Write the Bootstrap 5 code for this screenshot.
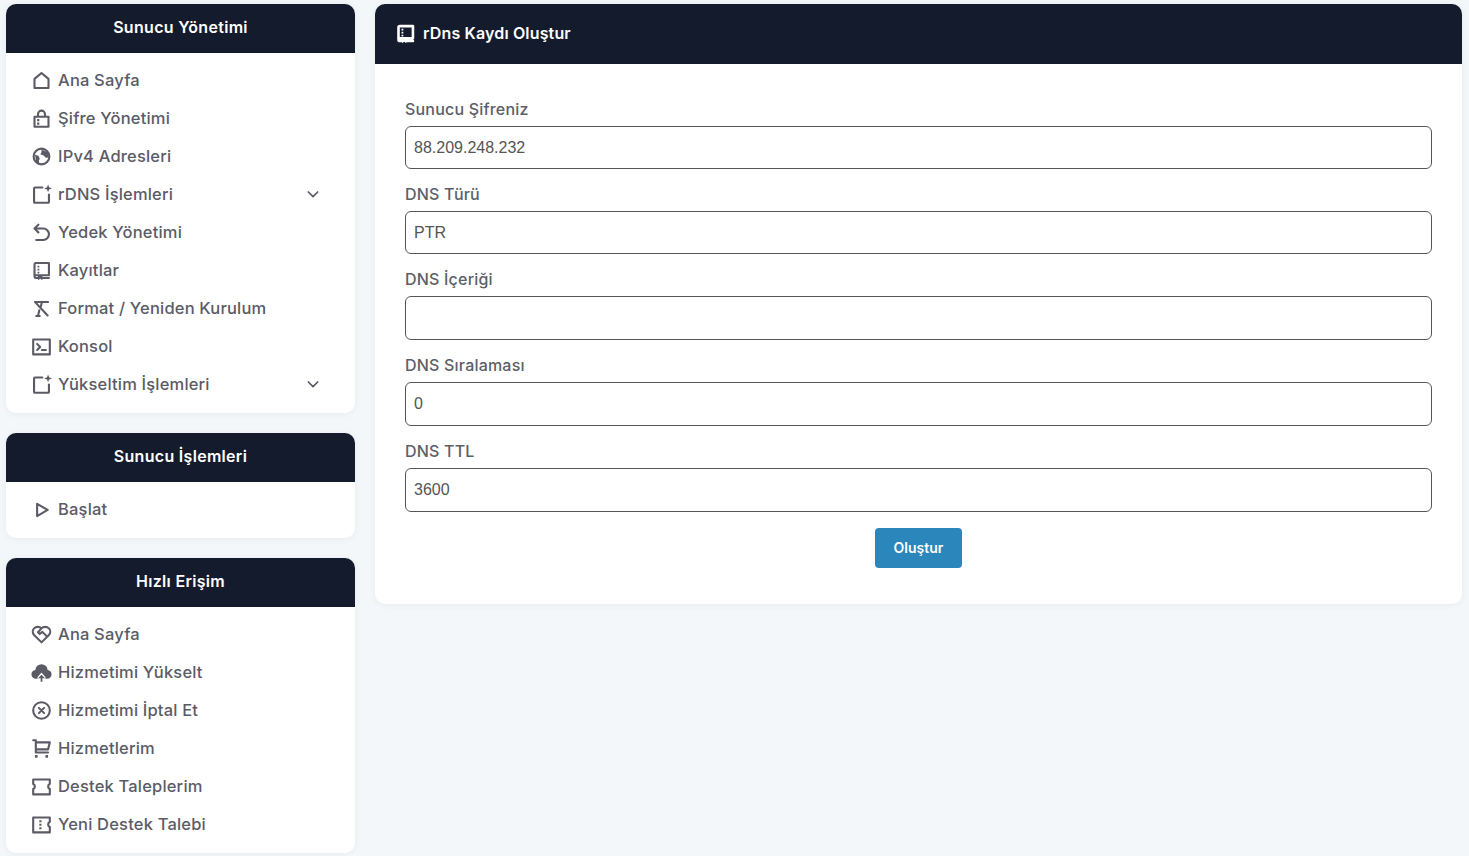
<!DOCTYPE html>
<html lang="tr">
<head>
    <meta charset="UTF-8">
    <meta name="viewport" content="width=device-width, initial-scale=1.0">
    <title>rDns Kaydı Oluştur</title>
    <link href="https://cdn.jsdelivr.net/npm/bootstrap@5.3.0/dist/css/bootstrap.min.css" rel="stylesheet">
    <style>
        body { background: #f3f7f9; font-family: Inter, "Noto Sans", sans-serif; color: #5b5b66; }
        .page-wrap { padding: 4px 7px 0 6px; gap: 20px; }
        .side-col { width: 349px; flex: none; }
        .main-col { flex: 1; min-width: 0; }
        .panel { border: 0; border-radius: 10px; box-shadow: 0 1px 6px rgba(30, 50, 70, .06); overflow: hidden; }
        .side-col .panel { margin-bottom: 20px; }
        .panel .card-header { background: #141b2d; color: #fff; border: 0; border-radius: 0; font-weight: 600; font-size: 16px; letter-spacing: .3px; }
        .side-col .card-header { height: 49px; line-height: 47px; padding: 0; text-align: center; }
        .main-col .card-header { height: 60px; padding: 0 20px 2px; gap: 7px; letter-spacing: .15px; }
        .main-col .card-header .ico { stroke-width: 3; }
        .side-menu { padding: 9px 0; }
        .side-menu a { height: 38px; padding: 0 34px 2px 25px; gap: 6px; color: #5b5b66; text-decoration: none; font-size: 16.5px; font-weight: 500; letter-spacing: .18px; }
        .ico { width: 21px; height: 21px; flex: none; fill: none; stroke: currentColor; stroke-width: 2.4; stroke-linejoin: round; stroke-linecap: round; }
        .solid { fill: currentColor; stroke: none; }
        .chev { width: 16px; height: 16px; margin-left: auto; }
        .form-body { padding: 35px 30px 36px; }
        .form-body .form-label { display: block; margin: 0 0 6px; height: 21px; line-height: 21px; font-size: 16px; font-weight: 500; letter-spacing: .2px; color: #5b6068; }
        .form-body .form-control { height: 43px; border: 1px solid #555; border-radius: 6px; padding: 0 8px; font-family: "Liberation Sans", Arial, sans-serif; font-size: 16px; color: #555; margin-bottom: 15px; }
        .form-body .form-control.tall-input { height: 44px; }
        .form-body .form-control:last-of-type { margin-bottom: 16px; }
        .save-btn { width: 87px; height: 40px; padding: 0 0 2px; background: #2a86bb; border: 0; border-radius: 4px; color: #fff; font-size: 14px; font-weight: 600; }
    </style>
</head>
<body>
    <svg class="d-none">
        <symbol id="i-home" viewBox="0 0 24 24"><path d="M4 20.500V10.200L12 3.500l8 6.700v10.300z"/></symbol>
        <symbol id="i-lock" viewBox="0 0 24 24"><path d="M4 10h16v11.500H4zM8 10V7a4 4 0 0 1 8 0v3"/><path class="solid" d="M7 12.500h2.500v2.500H7zM7 16.500h2.500V19H7z"/></symbol>
        <symbol id="i-earth" viewBox="0 0 24 24"><circle cx="12" cy="12" r="9"/><path class="solid" d="M12 4l7 3 1.500 6-3.500.500-3-3-3.500-1 1.500-2.500zM4.500 10l4 1 1.500 3.500-1 2 .5 4-3.500-2.500z"/></symbol>
        <symbol id="i-spark" viewBox="0 0 24 24"><path d="M13 4H4.500a1 1 0 0 0-1 1v15.500a1 1 0 0 0 1 1H19.500a1 1 0 0 0 1-1V12"/><path class="solid" d="M19.500 .5l1.200 3.300 3.300 1.200-3.300 1.200-1.200 3.300-1.200-3.300L15 5l3.300-1.200z"/></symbol>
        <symbol id="i-back" viewBox="0 0 24 24"><path d="M8.500 3L4 7.500l4.500 4.500M4.500 7.500H14a6.500 6.500 0 0 1 0 13H6"/></symbol>
        <symbol id="i-book" viewBox="0 0 24 24"><path d="M4 18V5a1.500 1.500 0 0 1 1.500-1.500H20.500v14H5.500A1.500 1.500 0 0 0 4 19a1.500 1.500 0 0 0 1.500 1.500H8M13 20.500h7.500"/><path class="solid" d="M7.500 6.500h2v2h-2zM7.500 10h2v2h-2zM7.500 13.500h2v2h-2zM8 18h5v5l-2.500-1.500L8 23z"/></symbol>
        <symbol id="i-format" viewBox="0 0 24 24"><path d="M4.500 4.500h15M12.500 4.500l-1.500 6M9.500 14l-1.500 6.500M6 20.500h4M5 5l14 15"/></symbol>
        <symbol id="i-term" viewBox="0 0 24 24"><path d="M2.500 4h19v17h-19zM7 9l3.500 3.500L7 16M12.500 16h4.500"/></symbol>
        <symbol id="i-chev" viewBox="0 0 24 24"><path d="M5 9l7 7 7-7" stroke-width="2.500"/></symbol>
        <symbol id="i-play" viewBox="0 0 24 24"><path d="M7 5.500l12 7-12 7z"/></symbol>
        <symbol id="i-heart" viewBox="0 0 24 24"><path d="M12 21L3.500 12.500a5.500 5.500 0 0 1 0-7.500 6 6 0 0 1 8.500 0 6 6 0 0 1 8.500 0 5.500 5.500 0 0 1 0 7.500zM12 5L8 9.500l2 2 3-2.500 5 5"/></symbol>
        <symbol id="i-cloud" viewBox="0 0 24 24"><path class="solid" d="M12 2.500a7 7 0 0 1 7 6.500 5 5 0 0 1-1 10h-1.500v-2l-4.500-5-4.500 5v2H6A5 5 0 0 1 5 9a7 7 0 0 1 7-6.500z"/><path class="solid" d="M12 14.500l4 4h-3v4h-2v-4H8z"/></symbol>
        <symbol id="i-close" viewBox="0 0 24 24"><circle cx="12" cy="12" r="9.500"/><path d="M9 9l6 6M15 9l-6 6"/></symbol>
        <symbol id="i-cart" viewBox="0 0 24 24"><path d="M2.500 2.500h3v14h14M5.500 5h16l-2 8H5.500"/><path class="solid" d="M4.500 19.500h3v3h-3zM16.500 19.500h3v3h-3z"/></symbol>
        <symbol id="i-ticket" viewBox="0 0 24 24"><path d="M2.500 4h19v5.200a3 3 0 0 0 0 5.600v6.200h-19v-6.200a3 3 0 0 0 0-5.600z"/></symbol>
        <symbol id="i-ticket2" viewBox="0 0 24 24"><path d="M2.500 4h19v5.200a3 3 0 0 0 0 5.600v6.200h-19z"/><path class="solid" d="M9.500 7h2.500v2.500H9.500zM9.500 11h2.500v2.500H9.500zM9.500 15h2.500v2.500H9.500z"/></symbol>
    </svg>

    <div class="page-wrap d-flex align-items-start">
        <div class="side-col">
            <div class="card panel">
                <div class="card-header">Sunucu Yönetimi</div>
                <div class="side-menu d-flex flex-column">
                    <a href="#" class="d-flex align-items-center"><svg class="ico"><use href="#i-home"/></svg>Ana Sayfa</a>
                    <a href="#" class="d-flex align-items-center"><svg class="ico"><use href="#i-lock"/></svg>Şifre Yönetimi</a>
                    <a href="#" class="d-flex align-items-center"><svg class="ico"><use href="#i-earth"/></svg>IPv4 Adresleri</a>
                    <a href="#" class="d-flex align-items-center"><svg class="ico"><use href="#i-spark"/></svg>rDNS İşlemleri<svg class="ico chev"><use href="#i-chev"/></svg></a>
                    <a href="#" class="d-flex align-items-center"><svg class="ico"><use href="#i-back"/></svg>Yedek Yönetimi</a>
                    <a href="#" class="d-flex align-items-center"><svg class="ico"><use href="#i-book"/></svg>Kayıtlar</a>
                    <a href="#" class="d-flex align-items-center"><svg class="ico"><use href="#i-format"/></svg>Format / Yeniden Kurulum</a>
                    <a href="#" class="d-flex align-items-center"><svg class="ico"><use href="#i-term"/></svg>Konsol</a>
                    <a href="#" class="d-flex align-items-center"><svg class="ico"><use href="#i-spark"/></svg>Yükseltim İşlemleri<svg class="ico chev"><use href="#i-chev"/></svg></a>
                </div>
            </div>
            <div class="card panel">
                <div class="card-header">Sunucu İşlemleri</div>
                <div class="side-menu d-flex flex-column">
                    <a href="#" class="d-flex align-items-center"><svg class="ico"><use href="#i-play"/></svg>Başlat</a>
                </div>
            </div>
            <div class="card panel">
                <div class="card-header">Hızlı Erişim</div>
                <div class="side-menu d-flex flex-column">
                    <a href="#" class="d-flex align-items-center"><svg class="ico"><use href="#i-heart"/></svg>Ana Sayfa</a>
                    <a href="#" class="d-flex align-items-center"><svg class="ico"><use href="#i-cloud"/></svg>Hizmetimi Yükselt</a>
                    <a href="#" class="d-flex align-items-center"><svg class="ico"><use href="#i-close"/></svg>Hizmetimi İptal Et</a>
                    <a href="#" class="d-flex align-items-center"><svg class="ico"><use href="#i-cart"/></svg>Hizmetlerim</a>
                    <a href="#" class="d-flex align-items-center"><svg class="ico"><use href="#i-ticket"/></svg>Destek Taleplerim</a>
                    <a href="#" class="d-flex align-items-center"><svg class="ico"><use href="#i-ticket2"/></svg>Yeni Destek Talebi</a>
                </div>
            </div>
        </div>

        <div class="main-col">
            <div class="card panel">
                <div class="card-header d-flex align-items-center"><svg class="ico"><use href="#i-book"/></svg>rDns Kaydı Oluştur</div>
                <form class="form-body">
                    <label class="form-label">Sunucu Şifreniz</label>
                    <input type="text" class="form-control" value="88.209.248.232">
                    <label class="form-label">DNS Türü</label>
                    <input type="text" class="form-control" value="PTR">
                    <label class="form-label">DNS İçeriği</label>
                    <input type="text" class="form-control tall-input">
                    <label class="form-label">DNS Sıralaması</label>
                    <input type="text" class="form-control tall-input" value="0">
                    <label class="form-label">DNS TTL</label>
                    <input type="text" class="form-control tall-input" value="3600">
                    <div class="text-center"><button type="button" class="btn save-btn">Oluştur</button></div>
                </form>
            </div>
        </div>
    </div>
</body>
</html>
